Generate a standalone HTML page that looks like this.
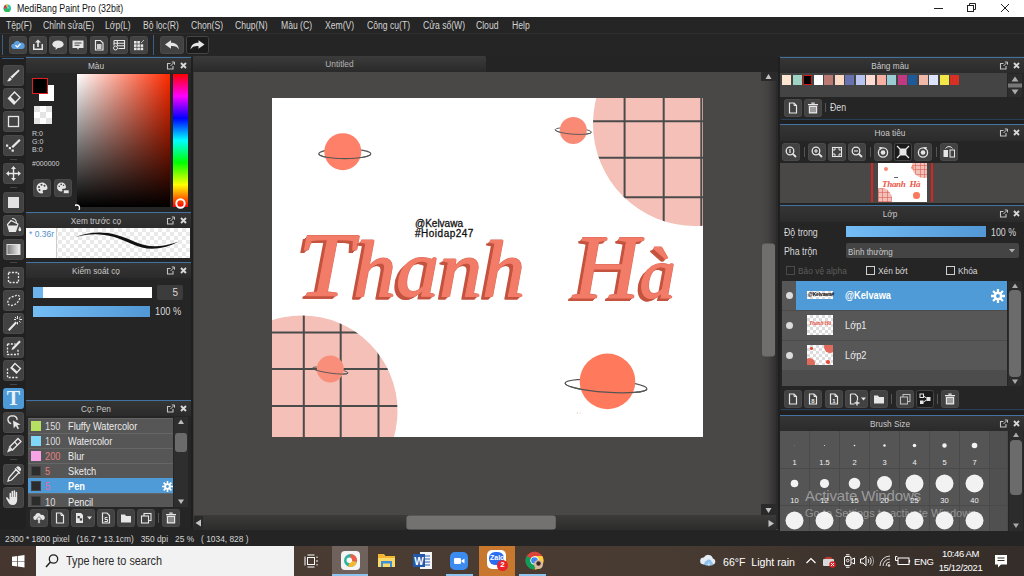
<!DOCTYPE html>
<html lang="vi">
<head>
<meta charset="utf-8">
<title>MediBang Paint Pro (32bit)</title>
<style>
*{box-sizing:border-box;margin:0;padding:0}
html,body{width:1024px;height:576px;overflow:hidden;background:#1f1f1f}
body{position:relative;font-family:"Liberation Sans","DejaVu Sans",sans-serif;font-size:10px;color:#d8d8d8;line-height:1}
.abs,#app *{position:absolute}
#app{position:absolute;left:0;top:0;width:1024px;height:576px;overflow:hidden}
#app svg *{position:static}
span.t,i.t{white-space:nowrap}
.sx{transform:scaleX(.88);transform-origin:0 50%}
/* title bar */
#title{left:0;top:0;width:1024px;height:16.500px;background:#fff;color:#222}
#title .name{left:17px;top:4px;font-size:10px;color:#111;transform:scaleX(.885);transform-origin:0 50%}
/* menu */
#menu{left:0;top:16.500px;width:1024px;height:17.500px;background:#252525;border-bottom:1px solid #2f2f2f}
#menu span{top:4.500px;font-size:10px;color:#d4d4d4;white-space:nowrap;transform:scaleX(.86);transform-origin:0 50%}
/* toolbar */
#tb{left:0;top:34px;width:1024px;height:23px;background:#252525;border-bottom:1px solid #2d2d2d}
.btn{background:#424242;border:1px solid #4a4a4a;border-radius:2.500px}
.btn.dark{background:#1b1b1b;border-color:#454545}
.btn svg{left:0;top:0}
/* panels */
.panel{background:#252525}
.ph{left:0;top:0;height:16px;background:linear-gradient(to bottom,#353535,#2b2b2b);border-top:1px solid #4273a3;color:#c9c9c9;font-size:9.5px;text-align:center;line-height:15px}
.ph i{font-style:normal}
.hl{font-family:'Liberation Serif','DejaVu Serif',serif;font-style:italic;font-weight:normal;color:#f27c68;line-height:1;letter-spacing:0;-webkit-text-stroke:1px #f27c68;text-shadow:1px 0 0 #d96a57,0 -1px 0 #d96a57,-1px 1px 0 #c4533f,-2px 2px 0 #c4533f,-3px 3px 0 #c4533f,-4px 3px 0 #c4533f}
.hl::first-letter{font-size:92px}
</style>
</head>
<body>
<div id="app">

<!-- ===== TITLE BAR ===== -->
<div id="title">
  <svg class="abs" style="left:3px;top:3.500px" width="8.500" height="8.500" viewBox="0 0 9 9"><circle cx="4.500" cy="4.500" r="4" fill="#27c3a4"/><path d="M4.500 4.500L.8 6A4 4 0 0 0 7.500 7.200z" fill="#2fb84c"/><path d="M4.500 4.500L.8 5A4 4 0 0 1 3 .8z" fill="#d9364c"/><path d="M4.500 4.500L3 .8A4 4 0 0 1 5.500 .6z" fill="#f0b93a"/><circle cx="5.300" cy="3.800" r="1.200" fill="#5fe0c8"/></svg>
  <span class="t name">MediBang Paint Pro (32bit)</span>
  <svg class="abs" style="left:930px;top:0" width="94" height="17" viewBox="0 0 94 17"><g stroke="#222" stroke-width="1" fill="none"><path d="M4 8.5h9"/><rect x="37.5" y="5.500" width="6" height="6"/><path d="M39.500 5.500v-2h6v6h-2"/><path d="M71 4l8 8M79 4l-8 8"/></g></svg>
</div>

<!-- ===== MENU BAR ===== -->
<div id="menu">
  <span style="left:6px">Tệp(F)</span>
  <span style="left:43px">Chỉnh sửa(E)</span>
  <span style="left:105px">Lớp(L)</span>
  <span style="left:143px">Bộ lọc(R)</span>
  <span style="left:191px">Chọn(S)</span>
  <span style="left:235px">Chụp(N)</span>
  <span style="left:281px">Màu (C)</span>
  <span style="left:325px">Xem(V)</span>
  <span style="left:367px">Công cụ(T)</span>
  <span style="left:423px">Cửa sổ(W)</span>
  <span style="left:476px">Cloud</span>
  <span style="left:512px">Help</span>
</div>

<!-- ===== TOOLBAR ===== -->
<div id="tb">
  <div class="abs" style="left:2px;top:1px;width:1px;height:20px;background:#3a5f86"></div>
  <div class="abs" style="left:153px;top:1px;width:1px;height:20px;background:#3a5f86"></div>
  <div class="btn" style="left:9px;top:2px;width:18px;height:18px"><svg width="16" height="16" viewBox="0 0 16 16"><path d="M4 12a2.6 2.6 0 0 1-.3-5.200A3.300 3.300 0 0 1 10 5.800a2.700 2.700 0 0 1 2.600 6.200z" fill="#5b9fe0"/><path d="M5.500 8.300l1.800 1.800 3.200-3.400" stroke="#fff" stroke-width="1.300" fill="none"/></svg></div>
  <div class="btn" style="left:29px;top:2px;width:18px;height:18px"><svg width="16" height="16" viewBox="0 0 16 16"><path d="M4.500 7h-1.500v6h10v-6h-1.500v4.500h-7z" fill="#e6e6e6"/><path d="M8 2.500l3 3h-2.200v4.500h-1.600v-4.500h-2.200z" fill="#e6e6e6"/></svg></div>
  <div class="btn" style="left:49px;top:2px;width:18px;height:18px"><svg width="16" height="16" viewBox="0 0 16 16"><ellipse cx="8" cy="7.200" rx="5.600" ry="3.800" fill="#e6e6e6"/><path d="M6 10l-.5 3 3-2.500z" fill="#e6e6e6"/></svg></div>
  <div class="btn" style="left:69px;top:2px;width:18px;height:18px"><svg width="16" height="16" viewBox="0 0 16 16"><path d="M2.500 3.500h11v7.500h-4.500l-1 1.800-1-1.800h-4.500z" fill="#e6e6e6"/><path d="M4.500 6h7M4.500 8.300h5" stroke="#424242" stroke-width="1.100"/></svg></div>
  <div class="btn" style="left:90px;top:2px;width:18px;height:18px"><svg width="16" height="16" viewBox="0 0 16 16"><path d="M4.500 3.500h5l2.500 2.500v7h-7.500z" fill="none" stroke="#e6e6e6" stroke-width="1.200"/><path d="M6 7h4.500v5h-4.500z" fill="#cfcfcf"/></svg></div>
  <div class="btn" style="left:110px;top:2px;width:18px;height:18px"><svg width="16" height="16" viewBox="0 0 16 16"><path d="M3 3.500h10.500v8h-6M3 3.500v5M3 6.200h10.500M6 8.800h7.500M6.300 3.500v5" fill="none" stroke="#e6e6e6" stroke-width="1.100"/><circle cx="4.500" cy="11" r="2" fill="none" stroke="#e6e6e6" stroke-width="1"/></svg></div>
  <div class="btn" style="left:130px;top:2px;width:18px;height:18px"><svg width="16" height="16" viewBox="0 0 16 16"><g fill="#e6e6e6"><rect x="3" y="4" width="2.600" height="2.600"/><rect x="6.300" y="4" width="2.600" height="2.600"/><rect x="3" y="7.300" width="2.600" height="2.600"/><rect x="6.300" y="7.300" width="2.600" height="2.600"/><rect x="9.600" y="7.300" width="2.600" height="2.600"/><rect x="3" y="10.600" width="2.600" height="2.600"/><rect x="6.300" y="10.600" width="2.600" height="2.600"/><rect x="9.600" y="10.600" width="2.600" height="2.600"/></g><path d="M10 6l3-3" stroke="#bbb" stroke-width="1"/></svg></div>
  <div class="btn" style="left:160px;top:2px;width:24px;height:18px"><svg width="22" height="16" viewBox="0 0 22 16"><path d="M4 7.500l6-4.300v2.600c5 0 7.500 2.500 8 6.700-1.500-2.600-4-3.600-8-3.400v2.700z" fill="#e6e6e6"/></svg></div>
  <div class="btn dark" style="left:186px;top:2px;width:23px;height:18px"><svg width="21" height="16" viewBox="0 0 21 16"><path d="M17.500 7.500l-6-4.300v2.600c-5 0-7.500 2.500-8 6.700 1.500-2.600 4-3.600 8-3.400v2.700z" fill="#e6e6e6"/></svg></div>
</div>

<!-- ===== LEFT TOOL COLUMN ===== -->
<div id="tools" class="abs" style="left:0;top:57px;width:26px;height:472px;background:#212121">
  <div class="abs" style="left:2px;top:1px;width:22px;height:1px;background:#3a5f86"></div>
<!--TOOLS_S-->
  <div class="btn" style="left:3px;top:8px;width:21px;height:21px"><svg width="19" height="19" viewBox="1 1 19 19"><path d="M15.500 4.500l1.200 1.200-7.500 7.800-1.800-1.800z" fill="#e8e8e8"/><path d="M7 12.200l1.800 1.800c-.8 2.200-3 2.600-5 2.200 1.600-.8 1.400-2.800 3.200-4z" fill="#e8e8e8"/></svg></div>
  <div class="btn" style="left:3px;top:31px;width:21px;height:21px"><svg width="19" height="19" viewBox="1 1 19 19"><path d="M11.500 4l5.500 5.500-6 6.500-5.500-5.500z" fill="none" stroke="#e8e8e8" stroke-width="1.400"/><path d="M7.500 8.600l5.400 5.400-2 2-5.400-5.400z" fill="#e8e8e8"/></svg></div>
  <div class="btn" style="left:3px;top:54px;width:21px;height:21px"><svg width="19" height="19" viewBox="1 1 19 19"><rect x="5.500" y="5.500" width="10" height="10" fill="none" stroke="#e8e8e8" stroke-width="1.300"/></svg></div>
  <div class="btn" style="left:3px;top:78px;width:21px;height:21px"><svg width="19" height="19" viewBox="1 1 19 19"><path d="M16.200 4l1.400 1.400-7.500 7.600-1.800-1.400z" fill="#e8e8e8"/><rect x="3" y="9.500" width="2.200" height="2.200" fill="#e8e8e8"/><rect x="5.800" y="12" width="2.200" height="2.200" fill="#e8e8e8"/><rect x="8.600" y="14.500" width="2.200" height="2.200" fill="#e8e8e8"/></svg></div>
  <div class="abs" style="left:10px;top:102px;width:7px;height:1px;background:#444"></div>
  <div class="btn" style="left:3px;top:106px;width:21px;height:21px"><svg width="19" height="19" viewBox="1 1 19 19"><path d="M10.500 3l2.500 3h-1.800v3.800h3.800v-1.800l3 2.500-3 2.500v-1.800h-3.800v3.800h1.800l-2.500 3-2.500-3h1.800v-3.800h-3.800v1.800l-3-2.500 3-2.500v1.800h3.800v-3.800h-1.800z" fill="#e8e8e8"/></svg></div>
  <div class="abs" style="left:10px;top:130px;width:7px;height:1px;background:#444"></div>
  <div class="btn" style="left:3px;top:135px;width:21px;height:21px"><svg width="19" height="19" viewBox="1 1 19 19"><rect x="5" y="5" width="11" height="11" fill="#e2e2e2"/></svg></div>
  <div class="btn" style="left:3px;top:158px;width:21px;height:21px"><svg width="19" height="19" viewBox="1 1 19 19"><path d="M8 5.500l7 3.500-2.500 7.500h-6l-2-7z" fill="none" stroke="#e8e8e8" stroke-width="1.200"/><path d="M5 10.500l9.500 0-2 5.500h-6z" fill="#e8e8e8"/><path d="M9 3.500c3 0 4.500 2 4.500 5" fill="none" stroke="#e8e8e8" stroke-width="1.100"/><path d="M16.800 11.500c.8 1.600 1.400 2.600 1.400 3.400a1.400 1.400 0 0 1-2.800 0c0-.8.600-1.800 1.400-3.400z" fill="#e8e8e8"/></svg></div>
  <div class="btn" style="left:3px;top:182px;width:21px;height:21px"><svg width="19" height="19" viewBox="1 1 19 19"><defs><linearGradient id="gg" x1="0" x2="1"><stop offset="0" stop-color="#777"/><stop offset="1" stop-color="#f2f2f2"/></linearGradient></defs><rect x="4" y="5.500" width="13" height="10" fill="url(#gg)" stroke="#ddd" stroke-width="1"/></svg></div>
  <div class="abs" style="left:10px;top:205px;width:7px;height:1px;background:#444"></div>
  <div class="btn" style="left:3px;top:210px;width:21px;height:21px"><svg width="19" height="19" viewBox="1 1 19 19"><rect x="5.500" y="5.500" width="10" height="10" fill="none" stroke="#e8e8e8" stroke-width="1.300" stroke-dasharray="2 1.400"/></svg></div>
  <div class="btn" style="left:3px;top:233px;width:21px;height:21px"><svg width="19" height="19" viewBox="1 1 19 19"><path d="M6 9c2-3 5-2 7-3.500 2-1.200 4.500.5 3.500 3.500-1 3.500-5 6.500-8.500 6.500-3.500 0-4-3.500-2-6.500z" fill="none" stroke="#e8e8e8" stroke-width="1.300" stroke-dasharray="2 1.400"/></svg></div>
  <div class="btn" style="left:3px;top:256px;width:21px;height:21px"><svg width="19" height="19" viewBox="1 1 19 19"><path d="M5 16.500l7.500-8 1.500 1.500-7.500 8z" fill="#e8e8e8"/><path d="M14.500 3v3M14.500 9v2.500M11 6.500h2M16.500 6.500h2.500M12 4l1.400 1.400M17.500 4l-1.400 1.400M17.500 9.500l-1.400-1.400" stroke="#e8e8e8" stroke-width="1"/></svg></div>
  <div class="btn" style="left:3px;top:280px;width:21px;height:21px"><svg width="19" height="19" viewBox="1 1 19 19"><path d="M4.500 7h8M4.500 7v10.500h10.500v-6" fill="none" stroke="#e8e8e8" stroke-width="1.300" stroke-dasharray="2 1.400"/><path d="M16.200 3.500l1.600 1.600-7 7.200-2.300.8.700-2.400z" fill="#e8e8e8"/></svg></div>
  <div class="btn" style="left:3px;top:303px;width:21px;height:21px"><svg width="19" height="19" viewBox="1 1 19 19"><path d="M4.500 8.500v9h10" fill="none" stroke="#e8e8e8" stroke-width="1.300" stroke-dasharray="2 1.400"/><path d="M12 3.500l5.500 5-4 4.500-5.500-5z" fill="none" stroke="#e8e8e8" stroke-width="1.300"/><path d="M9 6.800l5.500 5-1 1.200-5.500-5z" fill="#e8e8e8"/></svg></div>
  <div class="abs" style="left:10px;top:327px;width:7px;height:1px;background:#444"></div>
  <div class="btn" style="left:3px;top:331px;width:21px;height:21px;background:#4d9ad6;border-color:#4d9ad6"><span class="t" style="left:0;top:-1px;width:19px;text-align:center;font-family:'Liberation Serif',serif;font-weight:bold;font-size:20px;color:#e8f2fb;line-height:21px">T</span></div>
  <div class="btn" style="left:3px;top:355px;width:21px;height:21px"><svg width="19" height="19" viewBox="1 1 19 19"><path d="M5 8c-.5-2.500 2-4.500 4.500-4 2.500-.5 5 1.500 4.500 4" fill="none" stroke="#e8e8e8" stroke-width="1.400"/><path d="M5 8c.2 2 1.500 3.200 3.200 3.600" fill="none" stroke="#e8e8e8" stroke-width="1.400"/><path d="M10 8.500l7.500 4-3.200.8 1.800 3.200-1.400.8-1.800-3.200-2.200 2.200z" fill="#e8e8e8"/></svg></div>
  <div class="btn" style="left:3px;top:378px;width:21px;height:21px"><svg width="19" height="19" viewBox="1 1 19 19"><path d="M15 3.500l3 3-8.500 8.500-3-3z" fill="none" stroke="#e8e8e8" stroke-width="1.300"/><path d="M6 12.500l3 3-5 2z" fill="#e8e8e8"/><path d="M11.500 7l3 3" stroke="#e8e8e8" stroke-width="1.200"/></svg></div>
  <div class="abs" style="left:10px;top:402px;width:7px;height:1px;background:#444"></div>
  <div class="btn" style="left:3px;top:407px;width:21px;height:21px"><svg width="19" height="19" viewBox="1 1 19 19"><path d="M13 5.500l3 3-7.500 7.500-3.500 1 1-3.500z" fill="none" stroke="#e8e8e8" stroke-width="1.300"/><path d="M12 4.500l5 5M14 3.500c1.500-1.500 4.500 1.500 3 3z" fill="#e8e8e8" stroke="#e8e8e8" stroke-width="1.300"/></svg></div>
  <div class="btn" style="left:3px;top:430px;width:21px;height:21px"><svg width="19" height="19" viewBox="1 1 19 19"><path d="M6.500 11v-4.500c0-1 1.500-1 1.500 0v3.500h.5v-5.500c0-1 1.600-1 1.600 0v5.500h.5v-6c0-1 1.600-1 1.600 0v6h.5v-4.500c0-1 1.500-1 1.500 0v7c0 3.500-1.500 5.500-4.500 5.500-2.500 0-3.500-1-4.500-3l-2-3.500c-.5-1 .8-1.800 1.500-.8l1.800 2.300z" fill="#e8e8e8"/></svg></div>
<!--TOOLS_E-->
</div>

<!-- ===== LEFT PANELS ===== -->
<!--LEFT_S-->
<div id="pcolor" class="panel" style="left:26px;top:57px;width:165px;height:155px">
  <div class="ph" style="width:165px;height:16px;line-height:15px"><i class="t" style="left:0;width:140px;text-align:center;transform:scaleX(.87)">Màu</i><svg style="left:139px;top:2px" width="24" height="11" viewBox="0 0 24 11"><path d="M5.500 3.500h-3v5.500h5.500v-3" fill="none" stroke="#c4c4c4" stroke-width="1.100"/><path d="M5.500 6l3.500-3.500M6.800 2h2.700v2.700" fill="none" stroke="#c4c4c4" stroke-width="1"/><path d="M16 3l5 5M21 3l-5 5" stroke="#d8d8d8" stroke-width="1.900"/></svg></div>
  <div class="abs" style="left:13px;top:28px;width:15px;height:16px;background:#fff"></div>
  <div class="abs" style="left:6px;top:21px;width:16px;height:16px;background:#000;border:1px solid #e02020"></div>
  <div class="abs" style="left:8px;top:49px;width:18px;height:18px;background:#fff"><div style="left:0;top:0;width:6px;height:6px;background:#e4e4e4"></div><div style="left:12px;top:0;width:6px;height:6px;background:#e4e4e4"></div><div style="left:6px;top:6px;width:6px;height:6px;background:#e4e4e4"></div><div style="left:0;top:12px;width:6px;height:6px;background:#e4e4e4"></div><div style="left:12px;top:12px;width:6px;height:6px;background:#e4e4e4"></div></div>
  <span class="t sx" style="left:6px;top:73px;font-size:8px;color:#d0d0d0">R:0</span>
  <span class="t sx" style="left:6px;top:81px;font-size:8px;color:#d0d0d0">G:0</span>
  <span class="t sx" style="left:6px;top:89px;font-size:8px;color:#d0d0d0">B:0</span>
  <span class="t sx" style="left:6px;top:103px;font-size:8px;color:#d0d0d0">#000000</span>
  <div class="btn" style="left:7px;top:122px;width:18px;height:18px"><svg width="16" height="16" viewBox="0 0 16 16"><path d="M8 2.500a5.500 5.500 0 1 0 0 11c1.200 0 1.400-1 .9-1.700-.6-.9 0-1.800 1-1.800h1.600c1.200 0 2-.8 2-2 0-3-2.500-5.500-5.500-5.500z" fill="#e6e6e6"/><circle cx="5" cy="7" r="1" fill="#424242"/><circle cx="7.500" cy="4.800" r="1" fill="#424242"/><circle cx="10.500" cy="5.800" r="1" fill="#424242"/><circle cx="5.500" cy="10" r="1" fill="#424242"/></svg></div>
  <div class="btn" style="left:28px;top:122px;width:18px;height:18px"><svg width="16" height="16" viewBox="0 0 16 16"><path d="M6.500 2.500a4.500 4.500 0 1 0 0 9c1 0 1.200-.8.800-1.400-.5-.7 0-1.400.8-1.400h1.200c1 0 1.700-.7 1.700-1.700 0-2.500-2-4.500-4.500-4.500z" fill="#e6e6e6"/><circle cx="4.200" cy="6.200" r=".8" fill="#424242"/><circle cx="6.200" cy="4.400" r=".8" fill="#424242"/><circle cx="8.600" cy="5.200" r=".8" fill="#424242"/><rect x="8.500" y="10" width="5.500" height="3.500" fill="#e6e6e6" stroke="#424242" stroke-width=".6"/></svg></div>
  <div class="abs" style="left:51px;top:17px;width:93px;height:133px;background:linear-gradient(to bottom,rgba(0,0,0,0),#000),linear-gradient(to right,#fff,#ff2a00)"></div>
  <svg class="abs" style="left:49px;top:145px" width="8" height="8" viewBox="0 0 8 8"><circle cx="1.500" cy="6" r="3" fill="none" stroke="#fff" stroke-width="1.300"/></svg>
  <div class="abs" style="left:147px;top:17px;width:15px;height:133px;background:linear-gradient(to bottom,#ff0000 0%,#ff00ff 16.600%,#0000ff 33.300%,#00ffff 50%,#00ff00 66.600%,#ffff00 83.300%,#ff0000 100%)"></div>
  <svg class="abs" style="left:148px;top:140px" width="13" height="13" viewBox="0 0 13 13"><circle cx="6.500" cy="6.500" r="4.200" fill="none" stroke="#fff" stroke-width="2"/></svg>
</div>
<div id="pprev" class="panel" style="left:26px;top:212px;width:165px;height:50px">
  <div class="ph" style="width:165px;height:16px;line-height:15px"><i class="t" style="left:0;width:140px;text-align:center;transform:scaleX(.87)">Xem trước cọ</i><svg style="left:139px;top:2px" width="24" height="11" viewBox="0 0 24 11"><path d="M5.500 3.500h-3v5.500h5.500v-3" fill="none" stroke="#c4c4c4" stroke-width="1.100"/><path d="M5.500 6l3.500-3.500M6.800 2h2.700v2.700" fill="none" stroke="#c4c4c4" stroke-width="1"/><path d="M16 3l5 5M21 3l-5 5" stroke="#d8d8d8" stroke-width="1.900"/></svg></div>
  <div class="abs" style="left:0;top:16px;width:164px;height:30px;background-color:#fff;background-image:linear-gradient(45deg,#e9e9e9 25%,transparent 25%,transparent 75%,#e9e9e9 75%),linear-gradient(45deg,#e9e9e9 25%,transparent 25%,transparent 75%,#e9e9e9 75%);background-size:8px 8px;background-position:0 0,4px 4px;overflow:hidden">
    <div class="abs" style="left:0;top:0;width:31px;height:30px;background:#fff;border-right:1px solid #ccc"></div>
    <span class="t" style="left:3px;top:2px;font-size:8.500px;color:#4f8fce">* 0.36r</span>
    <svg class="abs" style="left:30px;top:0" width="134" height="30" viewBox="0 0 134 30"><path d="M18 9.500C40 1 58 4 78 13.500c14 6.500 28 6 45 0-17 8.500-32 9.800-47 2.500C56 6.500 40 3 18 9.500z" fill="#111"/></svg>
  </div>
</div>
<div id="pctrl" class="panel" style="left:26px;top:262px;width:165px;height:138px">
  <div class="ph" style="width:165px;height:16px;line-height:15px"><i class="t" style="left:0;width:140px;text-align:center;transform:scaleX(.87)">Kiểm soát cọ</i><svg style="left:139px;top:2px" width="24" height="11" viewBox="0 0 24 11"><path d="M5.500 3.500h-3v5.500h5.500v-3" fill="none" stroke="#c4c4c4" stroke-width="1.100"/><path d="M5.500 6l3.500-3.500M6.800 2h2.700v2.700" fill="none" stroke="#c4c4c4" stroke-width="1"/><path d="M16 3l5 5M21 3l-5 5" stroke="#d8d8d8" stroke-width="1.900"/></svg></div>
  <div class="abs" style="left:7px;top:25px;width:119px;height:11px;background:#fff"><div style="left:0;top:0;width:10px;height:11px;background:#6db4ee"></div></div>
  <div class="abs" style="left:131px;top:23px;width:26px;height:15px;background:#3c3c3c;border-radius:2px"><span class="t" style="left:0;top:3px;width:21px;text-align:right;font-size:10px;color:#d8d8d8">5</span></div>
  <div class="abs" style="left:7px;top:44px;width:117px;height:11px;background:linear-gradient(to right,#74bcf4,#5298d6)"></div>
  <span class="t sx" style="left:129px;top:44px;font-size:10.500px;color:#d8d8d8">100 %</span>
</div>
<div id="pbrush" class="panel" style="left:26px;top:400px;width:165px;height:129px">
  <div class="ph" style="width:165px;height:16px;line-height:15px"><i class="t" style="left:0;width:140px;text-align:center;transform:scaleX(.87)">Cọ: Pen</i><svg style="left:139px;top:2px" width="24" height="11" viewBox="0 0 24 11"><path d="M5.500 3.500h-3v5.500h5.500v-3" fill="none" stroke="#c4c4c4" stroke-width="1.100"/><path d="M5.500 6l3.500-3.500M6.800 2h2.700v2.700" fill="none" stroke="#c4c4c4" stroke-width="1"/><path d="M16 3l5 5M21 3l-5 5" stroke="#d8d8d8" stroke-width="1.900"/></svg></div>
  <div class="abs" style="left:2px;top:17.5px;width:145px;height:15px;background:#565656;border-top:1px solid #666;overflow:hidden"><div style="left:3px;top:2px;width:10px;height:10px;background:#b5e061;"></div><span class="t sx" style="left:16.500px;top:2.500px;font-size:10.500px;color:#ddd">150</span><span class="t sx" style="left:40px;top:2.500px;font-size:10.500px;color:#ececec;font-weight:normal">Fluffy Watercolor</span></div>
  <div class="abs" style="left:2px;top:32.6px;width:145px;height:15px;background:#565656;border-top:1px solid #666;overflow:hidden"><div style="left:3px;top:2px;width:10px;height:10px;background:#7fd8f8;"></div><span class="t sx" style="left:16.500px;top:2.500px;font-size:10.500px;color:#ddd">100</span><span class="t sx" style="left:40px;top:2.500px;font-size:10.500px;color:#ececec;font-weight:normal">Watercolor</span></div>
  <div class="abs" style="left:2px;top:47.7px;width:145px;height:15px;background:#565656;border-top:1px solid #666;overflow:hidden"><div style="left:3px;top:2px;width:10px;height:10px;background:#f7a3e6;"></div><span class="t sx" style="left:16.500px;top:2.500px;font-size:10.500px;color:#e07f7f">200</span><span class="t sx" style="left:40px;top:2.500px;font-size:10.500px;color:#ececec;font-weight:normal">Blur</span></div>
  <div class="abs" style="left:2px;top:62.8px;width:145px;height:15px;background:#565656;border-top:1px solid #666;overflow:hidden"><div style="left:3px;top:2px;width:10px;height:10px;background:#2c2c2c;border:1px solid #444;"></div><span class="t sx" style="left:16.500px;top:2.500px;font-size:10.500px;color:#e07f7f">5</span><span class="t sx" style="left:40px;top:2.500px;font-size:10.500px;color:#ececec;font-weight:normal">Sketch</span></div>
  <div class="abs" style="left:2px;top:77.9px;width:145px;height:15px;background:#4f9bd7;border-top:1px solid #4f9bd7;overflow:hidden"><div style="left:3px;top:2px;width:10px;height:10px;background:#2c2c2c;border:1px solid #444;"></div><span class="t sx" style="left:16.500px;top:2.500px;font-size:10.500px;color:#e86aa0">5</span><span class="t sx" style="left:40px;top:2.500px;font-size:10.500px;color:#fff;font-weight:bold">Pen</span><svg style="left:134px;top:2px" width="11" height="11" viewBox="0 0 11 11"><g fill="#fff"><circle cx="5.500" cy="5.500" r="3.300"/><path d="M4.700 0h1.600v11h-1.600zM0 4.700h11v1.600h-11z"/><path d="M4.700 0h1.600v11h-1.600zM0 4.700h11v1.600h-11z" transform="rotate(45 5.500 5.500)"/></g><circle cx="5.500" cy="5.500" r="1.400" fill="#4f9bd7"/></svg></div>
  <div class="abs" style="left:2px;top:93px;width:145px;height:14px;background:#565656;border-top:1px solid #666;overflow:hidden"><div style="left:3px;top:2px;width:10px;height:10px;background:#2c2c2c;border:1px solid #444;"></div><span class="t sx" style="left:16.500px;top:2.500px;font-size:10.500px;color:#ddd">10</span><span class="t sx" style="left:40px;top:2.500px;font-size:10.500px;color:#ececec;font-weight:normal">Pencil</span></div>
  <div class="abs" style="left:148px;top:17px;width:14px;height:90px;background:#2e2e2e"></div>
  <svg class="abs" style="left:148px;top:17px" width="14" height="90" viewBox="0 0 14 90"><path d="M7 2.500l3 4.500h-6z" fill="#bdbdbd"/><path d="M7 87l3-4.500h-6z" fill="#bdbdbd"/><rect x="1" y="16" width="12" height="19" rx="3" fill="#6b6b6b"/></svg>
  <div class="btn" style="left:4px;top:109px;width:18px;height:18px"><svg width="16" height="16" viewBox="0 0 16 16"><path d="M4 10a2.300 2.300 0 0 1 .2-4.500A3 3 0 0 1 10 5a2.500 2.500 0 0 1 2 5z" fill="#e6e6e6"/><path d="M8 6.500l3 3.300h-1.900v3.700h-2.200v-3.700h-1.900z" fill="#e6e6e6" stroke="#424242" stroke-width=".6"/></svg></div><div class="btn" style="left:25px;top:109px;width:18px;height:18px"><svg width="16" height="16" viewBox="0 0 16 16"><path d="M4.500 3h4.500l2.500 2.500v7.500h-7z" fill="none" stroke="#e6e6e6" stroke-width="1.200"/><path d="M9 3v2.500h2.500" fill="none" stroke="#e6e6e6" stroke-width="1"/></svg></div><div class="btn" style="left:45px;top:109px;width:24px;height:18px"><svg width="22" height="16" viewBox="0 0 22 16"><path d="M4 3h5l2 2v8h-7z" fill="#e6e6e6"/><rect x="5.500" y="6" width="2.300" height="2.300" fill="#424242"/><rect x="7.800" y="8.300" width="2.300" height="2.300" fill="#424242"/><path d="M15 6.500h5l-2.500 3z" fill="#e6e6e6"/></svg></div><div class="btn" style="left:71px;top:109px;width:18px;height:18px"><svg width="16" height="16" viewBox="0 0 16 16"><path d="M4.500 3h4.500l2.500 2.500v7.500h-7z" fill="none" stroke="#e6e6e6" stroke-width="1.200"/><path d="M9.500 7.500h-2.500v2h2.500v2h-3" fill="none" stroke="#e6e6e6" stroke-width="1"/></svg></div><div class="btn" style="left:91px;top:109px;width:18px;height:18px"><svg width="16" height="16" viewBox="0 0 16 16"><path d="M3 4.500h4l1 1.500h5v6.500h-10z" fill="#e6e6e6"/></svg></div><div class="btn" style="left:111px;top:109px;width:18px;height:18px"><svg width="16" height="16" viewBox="0 0 16 16"><rect x="6" y="3.500" width="7" height="7" fill="none" stroke="#e6e6e6" stroke-width="1.100"/><rect x="3.500" y="6" width="7" height="7" fill="#424242" stroke="#e6e6e6" stroke-width="1.100"/></svg></div><div class="abs" style="left:132px;top:113px;width:1px;height:10px;background:#555"></div><div class="btn" style="left:136px;top:109px;width:18px;height:18px"><svg width="16" height="16" viewBox="0 0 16 16"><path d="M3.800 5.800h8.400v7.700h-8.400z" fill="#e6e6e6"/><path d="M6 7v5.200M8 7v5.200M10 7v5.200" stroke="#3a3a3a" stroke-width="1.100"/><path d="M3 4.600h10M6.300 3.200h3.400" stroke="#e6e6e6" stroke-width="1.300"/></svg></div>
</div>
<!--LEFT_E-->

<!-- ===== CANVAS AREA ===== -->
<div id="cv" class="abs" style="left:193px;top:57px;width:585px;height:473px;background:#4a4847;z-index:1">
  <div class="abs" style="left:0;top:-1px;width:585px;height:16px;background:#242424"></div>
  <div class="abs" style="left:0;top:-1px;width:293px;height:16px;background:linear-gradient(to bottom,#3b3b3b,#2a2a2a);border-radius:2px 2px 0 0"><span class="t" style="left:0;top:3px;width:293px;text-align:center;font-size:9.500px;color:#b4b4b4;transform:scaleX(.88)">Untitled</span></div>
  <div id="paper" class="abs" style="left:79px;top:41px;width:431px;height:339px;background:#fff;overflow:hidden">
<!--PAPER_S-->
<svg class="abs" style="left:0;top:0" width="431" height="339" viewBox="0 0 431 339">
<clipPath id="c1"><circle cx="423" cy="26" r="102"/></clipPath><circle cx="423" cy="26" r="102" fill="#f4c0b8"/><g clip-path="url(#c1)" stroke="#4b4b4b" stroke-width="2" fill="none"><path d="M352.6 -5V345"/><path d="M391.7 -5V345"/><path d="M429.3 -5V345"/><path d="M-5 23.3H440"/><path d="M-5 59.7H440"/><path d="M-5 99.3H440"/></g>
<clipPath id="c2"><circle cx="30" cy="313" r="95.5"/></clipPath><circle cx="30" cy="313" r="95.5" fill="#f4c0b8"/><g clip-path="url(#c2)" stroke="#4b4b4b" stroke-width="2" fill="none"><path d="M31.8 -5V345"/><path d="M68.7 -5V345"/><path d="M106.5 -5V345"/><path d="M-5 234.5H440"/><path d="M-5 271H440"/><path d="M-5 308H440"/></g>
<g><ellipse cx="72.8" cy="55.8" rx="26" ry="4.8" transform="rotate(0 72.8 55.8)" fill="none" stroke="#555" stroke-width="1.1"/><circle cx="70.8" cy="53.7" r="18.5" fill="#ff8068"/><path d="M46.8 55.8A26 4.8 0 0 0 98.8 55.8" transform="rotate(0 72.8 55.8)" fill="none" stroke="#555" stroke-width="1.1"/></g>
<g><ellipse cx="301.3" cy="33" rx="18.2" ry="3.2" transform="rotate(4 301.3 33)" fill="none" stroke="#555" stroke-width="0.9"/><circle cx="301.3" cy="32.4" r="13.5" fill="#f98b76"/><path d="M283.1 33A18.2 3.2 0 0 0 319.5 33" transform="rotate(4 301.3 33)" fill="none" stroke="#555" stroke-width="0.9"/></g>
<g><ellipse cx="58.3" cy="272.5" rx="18" ry="2.6" transform="rotate(8 58.3 272.5)" fill="none" stroke="#555" stroke-width="0.9"/><circle cx="58.3" cy="271" r="13.5" fill="#f98f7b"/><path d="M40.3 272.5A18 2.6 0 0 0 76.3 272.5" transform="rotate(8 58.3 272.5)" fill="none" stroke="#555" stroke-width="0.9"/></g>
<g><ellipse cx="334" cy="288" rx="41" ry="6.2" transform="rotate(4 334 288)" fill="none" stroke="#555" stroke-width="1.2"/><circle cx="335.5" cy="283.4" r="27.8" fill="#ff7a5c"/><path d="M293 288A41 6.2 0 0 0 375 288" transform="rotate(4 334 288)" fill="none" stroke="#555" stroke-width="1.2"/></g>
<circle cx="305.500" cy="315" r=".6" fill="#f0a090"/><circle cx="308" cy="315" r=".5" fill="#f0b0a0"/>
</svg>
<span class="t" style="left:143px;top:121px;font-size:10px;color:#111;-webkit-text-stroke:.3px #111">@Kelvawa</span>
<span class="t" style="left:143px;top:130.500px;font-size:10px;color:#111;letter-spacing:.5px;-webkit-text-stroke:.3px #111">#Hoidap247</span>
<span class="t hl hl1" style="left:26px;top:121px;font-size:80px;transform:scaleX(1.075);transform-origin:0 0">Thanh</span><span class="t hl hl2" style="left:301px;top:123px;font-size:72px;transform:scaleX(1.0);transform-origin:0 0">Hà</span>

<!--PAPER_E-->
  </div>
  <!--SB_S-->
  <div class="abs" style="left:568px;top:15px;width:15px;height:445px;background:linear-gradient(to right,#4a4847 0%,#444241 45%,#302f2f 100%)"></div>
  <div class="abs" style="left:568px;top:15px;width:15px;height:9px;background:#2a2a2a"></div>
  <div class="abs" style="left:568px;top:447px;width:15px;height:11px;background:#2a2a2a"></div>
  <svg class="abs" style="left:568px;top:15px" width="15" height="445" viewBox="0 0 15 445"><path d="M7.500 2l3 5h-6z" fill="#c4c4c4"/><path d="M7.500 441l3-5h-6z" fill="#c4c4c4"/><rect x="1" y="171.500" width="13" height="113" rx="3" fill="#6f6e6c"/></svg>
  <div class="abs" style="left:0;top:457.500px;width:583px;height:15.500px;background:linear-gradient(to bottom,#3c3b3a,#2c2c2c);z-index:2"></div>
  <div class="abs" style="left:1px;top:459px;width:9px;height:14px;background:#2a2a2a;z-index:2"></div>
  
  <svg class="abs" style="left:0;top:458px;z-index:2" width="583" height="15" viewBox="0 0 583 15"><path d="M2.500 8l5.500-3.500v7z" fill="#c4c4c4"/><path d="M581 8.500l-5.500-3.500v7z" fill="#c4c4c4"/><rect x="213.400" y=".5" width="149.400" height="14" rx="3" fill="#737271"/></svg>
  <div class="abs" style="left:0;top:15px;width:1px;height:457px;background:#3a3a3c"></div>
  
  <div class="abs" style="left:583px;top:15px;width:2px;height:457px;background:#2a2a2a"></div>
  <!--SB_E-->
</div>

<!-- ===== RIGHT PANELS ===== -->
<!--RIGHT_S-->
<div id="ppal" class="panel" style="left:780px;top:57px;width:244px;height:63px">
  <div class="ph" style="width:244px;height:16px;line-height:15px"><i class="t" style="left:0;width:220px;text-align:center;transform:scaleX(.87)">Bảng màu</i><svg style="left:218px;top:2px" width="24" height="11" viewBox="0 0 24 11"><path d="M5.500 3.500h-3v5.500h5.500v-3" fill="none" stroke="#c4c4c4" stroke-width="1.100"/><path d="M5.500 6l3.500-3.500M6.800 2h2.700v2.700" fill="none" stroke="#c4c4c4" stroke-width="1"/><path d="M16 3l5 5M21 3l-5 5" stroke="#d8d8d8" stroke-width="1.900"/></svg></div>
  <div class="abs" style="left:0;top:16px;width:227px;height:24px;background:#444"><div class="abs" style="left:2px;top:2px;width:9px;height:9.500px;background:#fde5cf;"></div><div class="abs" style="left:12.5px;top:2px;width:9px;height:9.500px;background:#9fd4c4;"></div><div class="abs" style="left:23px;top:2px;width:9px;height:9.500px;background:#000000;border:1px solid #d01818;"></div><div class="abs" style="left:33.5px;top:2px;width:9px;height:9.500px;background:#ffffff;"></div><div class="abs" style="left:44px;top:2px;width:9px;height:9.500px;background:#b97a74;"></div><div class="abs" style="left:54.5px;top:2px;width:9px;height:9.500px;background:#fcd9c3;"></div><div class="abs" style="left:65px;top:2px;width:9px;height:9.500px;background:#6872ae;"></div><div class="abs" style="left:75.5px;top:2px;width:9px;height:9.500px;background:#b9c3ef;"></div><div class="abs" style="left:86px;top:2px;width:9px;height:9.500px;background:#fcdcd3;"></div><div class="abs" style="left:96.5px;top:2px;width:9px;height:9.500px;background:#f5b0a3;"></div><div class="abs" style="left:107px;top:2px;width:9px;height:9.500px;background:#9bcbd3;"></div><div class="abs" style="left:117.5px;top:2px;width:9px;height:9.500px;background:#c03a82;"></div><div class="abs" style="left:128px;top:2px;width:9px;height:9.500px;background:#1f5a98;"></div><div class="abs" style="left:138.5px;top:2px;width:9px;height:9.500px;background:#f0b8a8;"></div><div class="abs" style="left:149px;top:2px;width:9px;height:9.500px;background:#dde3fa;"></div><div class="abs" style="left:159.5px;top:2px;width:9px;height:9.500px;background:#f5e648;"></div><div class="abs" style="left:170px;top:2px;width:9px;height:9.500px;background:#d93025;"></div></div>
  <svg class="abs" style="left:228px;top:17px" width="14" height="23" viewBox="0 0 14 23"><rect x="0" y="0" width="14" height="23" fill="#2c2c2c"/><path d="M7 2.500l3.500 5h-7zM7 20.500l3.500-5h-7z" fill="#aaa"/><rect x="0" y="9.500" width="14" height="4" fill="#777"/></svg>
  <div class="btn" style="left:4px;top:42px;width:18px;height:18px"><svg width="16" height="16" viewBox="0 0 16 16"><path d="M4.500 3h4.500l2.500 2.500v7.500h-7z" fill="none" stroke="#e6e6e6" stroke-width="1.200"/><path d="M9 3v2.500h2.500" fill="none" stroke="#e6e6e6" stroke-width="1"/></svg></div><div class="btn" style="left:24px;top:42px;width:18px;height:18px"><svg width="16" height="16" viewBox="0 0 16 16"><path d="M3.800 5.800h8.400v7.700h-8.400z" fill="#e6e6e6"/><path d="M6 7v5.200M8 7v5.200M10 7v5.200" stroke="#424242" stroke-width=".9"/><path d="M3 4.600h10M6.300 3.200h3.400" stroke="#e6e6e6" stroke-width="1.300"/></svg></div>
  <div class="abs" style="left:45px;top:46px;width:1px;height:9px;background:#555"></div>
  <span class="t sx" style="left:50px;top:46px;font-size:10px;color:#d8d8d8">Đen</span>
  <div class="abs" style="left:1px;top:62px;width:243px;height:1px;background:#273f58"></div>
</div>
<div id="pnav" class="panel" style="left:780px;top:124px;width:244px;height:81px">
  <div class="ph" style="width:244px;height:17px;line-height:16px"><i class="t" style="left:0;width:220px;text-align:center;transform:scaleX(.87)">Hoa tiêu</i><svg style="left:218px;top:2px" width="24" height="11" viewBox="0 0 24 11"><path d="M5.500 3.500h-3v5.500h5.500v-3" fill="none" stroke="#c4c4c4" stroke-width="1.100"/><path d="M5.500 6l3.500-3.500M6.800 2h2.700v2.700" fill="none" stroke="#c4c4c4" stroke-width="1"/><path d="M16 3l5 5M21 3l-5 5" stroke="#d8d8d8" stroke-width="1.900"/></svg></div>
  <div class="btn" style="left:2px;top:19px;width:18px;height:18px"><svg width="16" height="16" viewBox="0 0 16 16"><circle cx="7" cy="7" r="3.800" fill="none" stroke="#e6e6e6" stroke-width="1.300"/><path d="M9.800 9.800l3.200 3.200" stroke="#e6e6e6" stroke-width="1.800"/><path d="M7 5v4" stroke="#e6e6e6" stroke-width="1.200"/></svg></div><div class="abs" style="left:24px;top:23px;width:1px;height:10px;background:#555"></div><div class="btn" style="left:28px;top:19px;width:18px;height:18px"><svg width="16" height="16" viewBox="0 0 16 16"><circle cx="7" cy="7" r="3.800" fill="none" stroke="#e6e6e6" stroke-width="1.300"/><path d="M9.800 9.800l3.200 3.200" stroke="#e6e6e6" stroke-width="1.800"/><path d="M7 5v4M5 7h4" stroke="#e6e6e6" stroke-width="1.100"/></svg></div><div class="btn" style="left:48px;top:19px;width:18px;height:18px"><svg width="16" height="16" viewBox="0 0 16 16"><rect x="3.500" y="3.500" width="9" height="9" fill="none" stroke="#e6e6e6" stroke-width="1.100"/><path d="M5 7v-2h2M9 5h2v2M11 9v2h-2M7 11h-2v-2" fill="none" stroke="#e6e6e6" stroke-width="1"/></svg></div><div class="btn" style="left:68px;top:19px;width:18px;height:18px"><svg width="16" height="16" viewBox="0 0 16 16"><circle cx="7" cy="7" r="3.800" fill="none" stroke="#e6e6e6" stroke-width="1.300"/><path d="M9.800 9.800l3.200 3.200" stroke="#e6e6e6" stroke-width="1.800"/><path d="M5 7h4" stroke="#e6e6e6" stroke-width="1.100"/></svg></div><div class="abs" style="left:90px;top:23px;width:1px;height:10px;background:#555"></div><div class="btn" style="left:94px;top:19px;width:18px;height:18px"><svg width="16" height="16" viewBox="0 0 16 16"><circle cx="8" cy="8.500" r="4.600" fill="none" stroke="#e6e6e6" stroke-width="1.300"/><circle cx="8" cy="8.500" r="2.300" fill="#e6e6e6"/><path d="M4 3l3.500.2-2 2.800z" fill="#e6e6e6"/></svg></div><div class="btn dark" style="left:114px;top:19px;width:18px;height:18px"><svg width="16" height="16" viewBox="0 0 16 16"><rect x="4.500" y="4.500" width="7" height="7" fill="#e6e6e6"/><path d="M2 2l3 3M14 2l-3 3M2 14l3-3M14 14l-3-3" stroke="#e6e6e6" stroke-width="1.300"/></svg></div><div class="btn" style="left:134px;top:19px;width:18px;height:18px"><svg width="16" height="16" viewBox="0 0 16 16"><circle cx="8" cy="8.500" r="4.600" fill="none" stroke="#e6e6e6" stroke-width="1.300"/><circle cx="8" cy="8.500" r="2.300" fill="#e6e6e6"/><path d="M12 3l-3.500.2 2 2.800z" fill="#e6e6e6"/></svg></div><div class="abs" style="left:156px;top:23px;width:1px;height:10px;background:#555"></div><div class="btn" style="left:160px;top:19px;width:18px;height:18px"><svg width="16" height="16" viewBox="0 0 16 16"><rect x="2.500" y="6" width="4.500" height="7" fill="#e6e6e6"/><rect x="9" y="6" width="4.500" height="7" fill="none" stroke="#e6e6e6" stroke-width="1"/><path d="M4.500 4.500c1.500-2.500 5.500-2.500 7 0" fill="none" stroke="#e6e6e6" stroke-width="1"/></svg></div>
  <div class="abs" style="left:0;top:39px;width:244px;height:40px;background:#4a4847;overflow:hidden">
    <div class="abs" style="left:98px;top:0;width:49px;height:39px;background:#fff;overflow:hidden">
      <div style="left:34px;top:-9px;width:24px;height:24px;border-radius:50%;background:#f2c0b8;background-image:repeating-linear-gradient(0deg,transparent 0 3.500px,rgba(215,90,80,.55) 3.500px 4.400px),repeating-linear-gradient(90deg,transparent 0 3.500px,rgba(215,90,80,.55) 3.500px 4.400px)"></div>
      <div style="left:-8px;top:25px;width:22px;height:22px;border-radius:50%;background:#f2c0b8;background-image:repeating-linear-gradient(0deg,transparent 0 3.500px,rgba(215,90,80,.55) 3.500px 4.400px),repeating-linear-gradient(90deg,transparent 0 3.500px,rgba(215,90,80,.55) 3.500px 4.400px)"></div>
      <div style="left:6px;top:4px;width:4px;height:4px;border-radius:50%;background:#f88a74"></div>
      <div style="left:33px;top:3px;width:3px;height:3px;border-radius:50%;background:#f88a74"></div>
      <div style="left:35px;top:29px;width:6.500px;height:6.500px;border-radius:50%;background:#fa7a5e"></div>
      <div style="left:16px;top:13.500px;width:4px;height:1px;background:#666"></div>
      <span class="t" style="left:4px;top:16.500px;font-family:'Liberation Serif',serif;font-style:italic;font-weight:bold;font-size:9px;color:#e8594a;letter-spacing:-.3px">Thanh&nbsp;&nbsp;Hà</span>
    </div>
    <div class="abs" style="left:91px;top:0;width:1.500px;height:39px;background:#d82424"></div>
    <div class="abs" style="left:151px;top:0;width:1.500px;height:39px;background:#d82424"></div>
  </div>
</div>
<div id="player" class="panel" style="left:780px;top:205px;width:244px;height:206px">
  <div class="ph" style="width:244px;height:17px;line-height:16px"><i class="t" style="left:0;width:220px;text-align:center;transform:scaleX(.87)">Lớp</i><svg style="left:218px;top:2px" width="24" height="11" viewBox="0 0 24 11"><path d="M5.500 3.500h-3v5.500h5.500v-3" fill="none" stroke="#c4c4c4" stroke-width="1.100"/><path d="M5.500 6l3.500-3.500M6.800 2h2.700v2.700" fill="none" stroke="#c4c4c4" stroke-width="1"/><path d="M16 3l5 5M21 3l-5 5" stroke="#d8d8d8" stroke-width="1.900"/></svg></div>
  <span class="t sx" style="left:4px;top:23px;font-size:10px;color:#d8d8d8">Độ trong</span>
  <div class="abs" style="left:66px;top:21px;width:140px;height:11px;background:linear-gradient(to right,#74bcf4,#5298d6)"></div>
  <span class="t sx" style="left:211px;top:23px;font-size:10px;color:#d8d8d8">100 %</span>
  <span class="t sx" style="left:4px;top:42px;font-size:10px;color:#d8d8d8">Pha trộn</span>
  <div class="abs" style="left:66px;top:38px;width:173px;height:15px;background:#444;border-radius:2px"><span class="t" style="left:2px;top:3.500px;font-size:9.500px;color:#c8c8c8;transform:scaleX(.84);transform-origin:0 50%">Bình thường</span><svg style="left:163px;top:6px" width="6" height="4" viewBox="0 0 6 4"><path d="M0 0h6l-3 3.500z" fill="#b0b0b0"/></svg></div>
  <div class="abs" style="left:6px;top:61px;width:9px;height:9px;border:1px solid #4a4a4a"></div><span class="t sx" style="left:18px;top:61px;font-size:9.500px;color:#5c5c5c">Bảo vệ alpha</span>
  <div class="abs" style="left:86px;top:61px;width:9px;height:9px;border:1px solid #d0d0d0"></div><span class="t sx" style="left:98px;top:61px;font-size:9.500px;color:#d8d8d8">Xén bớt</span>
  <div class="abs" style="left:166px;top:61px;width:9px;height:9px;border:1px solid #d0d0d0"></div><span class="t sx" style="left:178px;top:61px;font-size:9.500px;color:#d8d8d8">Khóa</span>
  <div class="abs" style="left:2px;top:76px;width:225px;height:105px;background:#4c4c4c;overflow:hidden">
    <div style="left:0;top:0;width:225px;height:29px;background:#575757"><div style="left:4px;top:11px;width:7px;height:7px;border-radius:50%;background:#dcdcdc"></div><div style="left:14px;top:0;width:211px;height:29px;background:#4f9bd7"></div>
      <div style="left:25px;top:10px;width:26px;height:8px;background-color:#fff;background-image:linear-gradient(45deg,#dcdcdc 25%,transparent 25%,transparent 75%,#dcdcdc 75%),linear-gradient(45deg,#dcdcdc 25%,transparent 25%,transparent 75%,#dcdcdc 75%);background-size:6px 6px;background-position:0 0,3px 3px;"><span class="t" style="left:1px;top:1px;font-size:5px;font-weight:bold;color:#000;letter-spacing:-.2px">@Kelvawa#</span></div>
      <span class="t sx" style="left:63px;top:9px;font-size:10.500px;font-weight:bold;color:#fff">@Kelvawa</span><svg style="left:209px;top:8px" width="14" height="14" viewBox="0 0 11 11"><g fill="#fff"><circle cx="5.500" cy="5.500" r="3.400"/><path d="M4.600 0h1.800v11h-1.800zM0 4.600h11v1.800h-11z"/><path d="M4.600 0h1.800v11h-1.800zM0 4.600h11v1.800h-11z" transform="rotate(45 5.500 5.500)"/></g><circle cx="5.500" cy="5.500" r="1.500" fill="#4f9bd7"/></svg></div>
    <div style="left:0;top:30px;width:225px;height:29px;background:#575757"><div style="left:4px;top:11px;width:7px;height:7px;border-radius:50%;background:#dcdcdc"></div>
      <div style="left:25px;top:4px;width:26px;height:20px;background-color:#fff;background-image:linear-gradient(45deg,#dcdcdc 25%,transparent 25%,transparent 75%,#dcdcdc 75%),linear-gradient(45deg,#dcdcdc 25%,transparent 25%,transparent 75%,#dcdcdc 75%);background-size:6px 6px;background-position:0 0,3px 3px;"><span class="t" style="left:2px;top:6px;font-family:'Liberation Serif',serif;font-style:italic;font-weight:bold;font-size:5.500px;letter-spacing:-.2px;color:#e8594a">Thanh Hà</span></div>
      <span class="t sx" style="left:63px;top:9px;font-size:10.500px;color:#ececec">Lớp1</span></div>
    <div style="left:0;top:60px;width:225px;height:29px;background:#575757"><div style="left:4px;top:11px;width:7px;height:7px;border-radius:50%;background:#dcdcdc"></div>
      <div style="left:25px;top:4px;width:26px;height:20px;background-color:#fff;background-image:linear-gradient(45deg,#dcdcdc 25%,transparent 25%,transparent 75%,#dcdcdc 75%),linear-gradient(45deg,#dcdcdc 25%,transparent 25%,transparent 75%,#dcdcdc 75%);background-size:6px 6px;background-position:0 0,3px 3px;overflow:hidden"><div style="left:17px;top:-4px;width:12px;height:12px;border-radius:50%;background:#e06a5c"></div><div style="left:-3px;top:13px;width:11px;height:11px;border-radius:50%;background:#e06a5c"></div><div style="left:19px;top:15px;width:3.500px;height:3.500px;border-radius:50%;background:#e84a3a"></div><div style="left:3px;top:2px;width:2.500px;height:2.500px;border-radius:50%;background:#e84a3a"></div></div>
      <span class="t sx" style="left:63px;top:9px;font-size:10.500px;color:#ececec">Lớp2</span></div>
    <div style="left:0;top:90px;width:225px;height:15px;background:#4c4c4c"></div>
  </div>
  <div class="abs" style="left:228px;top:76px;width:14px;height:105px;background:#2c2c2c"></div>
  <svg class="abs" style="left:228px;top:76px" width="14" height="105" viewBox="0 0 14 105"><path d="M7 2.500l3 4.500h-6z" fill="#aaa"/><path d="M7 103l3-4.500h-6z" fill="#aaa"/><rect x="1" y="9" width="12" height="87" rx="4" fill="#6b6b6b"/></svg>
  <div class="btn" style="left:4px;top:184.5px;width:18px;height:18px"><svg width="16" height="16" viewBox="0 0 16 16"><path d="M4.500 3h4.500l2.500 2.500v7.500h-7z" fill="none" stroke="#e6e6e6" stroke-width="1.200"/><path d="M9 3v2.500h2.500" fill="none" stroke="#e6e6e6" stroke-width="1"/></svg></div><div class="btn" style="left:24px;top:184.5px;width:18px;height:18px"><svg width="16" height="16" viewBox="0 0 16 16"><path d="M4.500 3h4.500l2.500 2.500v7.500h-7z" fill="none" stroke="#e6e6e6" stroke-width="1.200"/><path d="M9 3v2.500h2.500" fill="none" stroke="#e6e6e6" stroke-width="1"/><text x="8" y="11.500" font-family="Liberation Sans,sans-serif" font-size="6" font-weight="bold" fill="#e6e6e6" text-anchor="middle">8</text></svg></div><div class="btn" style="left:45px;top:184.5px;width:18px;height:18px"><svg width="16" height="16" viewBox="0 0 16 16"><path d="M4.500 3h4.500l2.500 2.500v7.500h-7z" fill="none" stroke="#e6e6e6" stroke-width="1.200"/><path d="M9 3v2.500h2.500" fill="none" stroke="#e6e6e6" stroke-width="1"/><text x="8" y="11.500" font-family="Liberation Sans,sans-serif" font-size="6" font-weight="bold" fill="#e6e6e6" text-anchor="middle">1</text></svg></div><div class="btn" style="left:65px;top:184.5px;width:23px;height:18px"><svg width="21" height="16" viewBox="0 0 21 16"><path d="M4.500 3h4.500l2.500 2.500v4M4.500 3v10h4" fill="none" stroke="#e6e6e6" stroke-width="1.200"/><path d="M11 9.500v5M8.500 12h5" stroke="#e6e6e6" stroke-width="1.400"/><path d="M15 6.500h5l-2.500 3z" fill="#e6e6e6"/></svg></div><div class="btn" style="left:90px;top:184.5px;width:18px;height:18px"><svg width="16" height="16" viewBox="0 0 16 16"><path d="M3 4.500h4l1 1.500h5v6.500h-10z" fill="#e6e6e6"/></svg></div><div class="abs" style="left:111px;top:188.5px;width:1px;height:10px;background:#555"></div><div class="btn" style="left:116px;top:184.5px;width:18px;height:18px"><svg width="16" height="16" viewBox="0 0 16 16"><rect x="6" y="3.500" width="7" height="7" fill="none" stroke="#bbb" stroke-width="1.100"/><rect x="3.500" y="6" width="7" height="7" fill="#424242" stroke="#bbb" stroke-width="1.100"/></svg></div><div class="btn dark" style="left:136px;top:184.5px;width:18px;height:18px"><svg width="16" height="16" viewBox="0 0 16 16"><rect x="3" y="3" width="3.500" height="3.500" fill="none" stroke="#e6e6e6" stroke-width="1"/><rect x="3" y="9.500" width="3.500" height="3.500" fill="#e6e6e6"/><rect x="9.500" y="6" width="4" height="4" fill="#e6e6e6"/><path d="M6.500 5l3 2M6.500 11l3-2" stroke="#e6e6e6" stroke-width="1"/></svg></div><div class="abs" style="left:157px;top:188.5px;width:1px;height:10px;background:#555"></div><div class="btn" style="left:161px;top:184.5px;width:18px;height:18px"><svg width="16" height="16" viewBox="0 0 16 16"><path d="M3.800 5.800h8.400v7.700h-8.400z" fill="#e6e6e6"/><path d="M6 7v5.200M8 7v5.200M10 7v5.200" stroke="#424242" stroke-width=".9"/><path d="M3 4.600h10M6.300 3.200h3.400" stroke="#e6e6e6" stroke-width="1.300"/></svg></div>
  <div class="abs" style="left:1px;top:204px;width:243px;height:1px;background:#273f58"></div>
</div>
<div id="psize" class="panel" style="left:780px;top:415px;width:244px;height:116px;z-index:2">
  <div class="ph" style="width:244px;height:16px;line-height:15px"><i class="t" style="left:0;width:220px;text-align:center;transform:scaleX(.87)">Brush Size</i><svg style="left:218px;top:2px" width="24" height="11" viewBox="0 0 24 11"><path d="M5.500 3.500h-3v5.500h5.500v-3" fill="none" stroke="#c4c4c4" stroke-width="1.100"/><path d="M5.500 6l3.500-3.500M6.800 2h2.700v2.700" fill="none" stroke="#c4c4c4" stroke-width="1"/><path d="M16 3l5 5M21 3l-5 5" stroke="#d8d8d8" stroke-width="1.900"/></svg></div>
  <div class="abs" style="left:0;top:16px;width:228px;height:99.500px;background:#555;overflow:hidden"><div class="abs" style="left:0px;top:0px;width:30px;height:37.500px;background:#555;border-right:1px solid #4a4a4a;border-bottom:1px solid #4a4a4a"><svg style="left:0;top:0" width="30" height="30" viewBox="0 0 30 30"><circle cx="14.500" cy="14.5" r="0.3" fill="#f2f2f2"/></svg><span class="t" style="left:0;top:28px;width:29px;text-align:center;font-size:7.500px;color:#f0f0f0">1</span></div><div class="abs" style="left:30px;top:0px;width:30px;height:37.500px;background:#555;border-right:1px solid #4a4a4a;border-bottom:1px solid #4a4a4a"><svg style="left:0;top:0" width="30" height="30" viewBox="0 0 30 30"><circle cx="14.500" cy="14.5" r="0.5" fill="#f2f2f2"/></svg><span class="t" style="left:0;top:28px;width:29px;text-align:center;font-size:7.500px;color:#f0f0f0">1.5</span></div><div class="abs" style="left:60px;top:0px;width:30px;height:37.500px;background:#555;border-right:1px solid #4a4a4a;border-bottom:1px solid #4a4a4a"><svg style="left:0;top:0" width="30" height="30" viewBox="0 0 30 30"><circle cx="14.500" cy="14.5" r="0.8" fill="#f2f2f2"/></svg><span class="t" style="left:0;top:28px;width:29px;text-align:center;font-size:7.500px;color:#f0f0f0">2</span></div><div class="abs" style="left:90px;top:0px;width:30px;height:37.500px;background:#555;border-right:1px solid #4a4a4a;border-bottom:1px solid #4a4a4a"><svg style="left:0;top:0" width="30" height="30" viewBox="0 0 30 30"><circle cx="14.500" cy="14.5" r="1.2" fill="#f2f2f2"/></svg><span class="t" style="left:0;top:28px;width:29px;text-align:center;font-size:7.500px;color:#f0f0f0">3</span></div><div class="abs" style="left:120px;top:0px;width:30px;height:37.500px;background:#555;border-right:1px solid #4a4a4a;border-bottom:1px solid #4a4a4a"><svg style="left:0;top:0" width="30" height="30" viewBox="0 0 30 30"><circle cx="14.500" cy="14.5" r="1.8" fill="#f2f2f2"/></svg><span class="t" style="left:0;top:28px;width:29px;text-align:center;font-size:7.500px;color:#f0f0f0">4</span></div><div class="abs" style="left:150px;top:0px;width:30px;height:37.500px;background:#555;border-right:1px solid #4a4a4a;border-bottom:1px solid #4a4a4a"><svg style="left:0;top:0" width="30" height="30" viewBox="0 0 30 30"><circle cx="14.500" cy="14.5" r="2.2" fill="#f2f2f2"/></svg><span class="t" style="left:0;top:28px;width:29px;text-align:center;font-size:7.500px;color:#f0f0f0">5</span></div><div class="abs" style="left:180px;top:0px;width:30px;height:37.500px;background:#555;border-right:1px solid #4a4a4a;border-bottom:1px solid #4a4a4a"><svg style="left:0;top:0" width="30" height="30" viewBox="0 0 30 30"><circle cx="14.500" cy="14.5" r="2.8" fill="#f2f2f2"/></svg><span class="t" style="left:0;top:28px;width:29px;text-align:center;font-size:7.500px;color:#f0f0f0">7</span></div><div class="abs" style="left:210px;top:0px;width:18px;height:37.500px;background:#505050;border-right:1px solid #4a4a4a;border-bottom:1px solid #4a4a4a"></div><div class="abs" style="left:0px;top:37.5px;width:30px;height:37.500px;background:#555;border-right:1px solid #4a4a4a;border-bottom:1px solid #4a4a4a"><svg style="left:0;top:0" width="30" height="30" viewBox="0 0 30 30"><circle cx="14.500" cy="14.5" r="3.8" fill="#f2f2f2"/></svg><span class="t" style="left:0;top:28px;width:29px;text-align:center;font-size:7.500px;color:#f0f0f0">10</span></div><div class="abs" style="left:30px;top:37.5px;width:30px;height:37.500px;background:#555;border-right:1px solid #4a4a4a;border-bottom:1px solid #4a4a4a"><svg style="left:0;top:0" width="30" height="30" viewBox="0 0 30 30"><circle cx="14.500" cy="14.5" r="4.6" fill="#f2f2f2"/></svg><span class="t" style="left:0;top:28px;width:29px;text-align:center;font-size:7.500px;color:#f0f0f0">12</span></div><div class="abs" style="left:60px;top:37.5px;width:30px;height:37.500px;background:#555;border-right:1px solid #4a4a4a;border-bottom:1px solid #4a4a4a"><svg style="left:0;top:0" width="30" height="30" viewBox="0 0 30 30"><circle cx="14.500" cy="14.5" r="5.8" fill="#f2f2f2"/></svg><span class="t" style="left:0;top:28px;width:29px;text-align:center;font-size:7.500px;color:#f0f0f0">15</span></div><div class="abs" style="left:90px;top:37.5px;width:30px;height:37.500px;background:#555;border-right:1px solid #4a4a4a;border-bottom:1px solid #4a4a4a"><svg style="left:0;top:0" width="30" height="30" viewBox="0 0 30 30"><circle cx="14.500" cy="14.5" r="7.5" fill="#f2f2f2"/></svg><span class="t" style="left:0;top:28px;width:29px;text-align:center;font-size:7.500px;color:#f0f0f0">20</span></div><div class="abs" style="left:120px;top:37.5px;width:30px;height:37.500px;background:#555;border-right:1px solid #4a4a4a;border-bottom:1px solid #4a4a4a"><svg style="left:0;top:0" width="30" height="30" viewBox="0 0 30 30"><circle cx="14.500" cy="14.5" r="9" fill="#f2f2f2"/></svg><span class="t" style="left:0;top:28px;width:29px;text-align:center;font-size:7.500px;color:#f0f0f0">25</span></div><div class="abs" style="left:150px;top:37.5px;width:30px;height:37.500px;background:#555;border-right:1px solid #4a4a4a;border-bottom:1px solid #4a4a4a"><svg style="left:0;top:0" width="30" height="30" viewBox="0 0 30 30"><circle cx="14.500" cy="14.5" r="9" fill="#f2f2f2"/></svg><span class="t" style="left:0;top:28px;width:29px;text-align:center;font-size:7.500px;color:#f0f0f0">30</span></div><div class="abs" style="left:180px;top:37.5px;width:30px;height:37.500px;background:#555;border-right:1px solid #4a4a4a;border-bottom:1px solid #4a4a4a"><svg style="left:0;top:0" width="30" height="30" viewBox="0 0 30 30"><circle cx="14.500" cy="14.5" r="9" fill="#f2f2f2"/></svg><span class="t" style="left:0;top:28px;width:29px;text-align:center;font-size:7.500px;color:#f0f0f0">40</span></div><div class="abs" style="left:210px;top:37.5px;width:18px;height:37.500px;background:#505050;border-right:1px solid #4a4a4a;border-bottom:1px solid #4a4a4a"></div><div class="abs" style="left:0px;top:75px;width:30px;height:37.500px;background:#555;border-right:1px solid #4a4a4a;border-bottom:1px solid #4a4a4a"><svg style="left:0;top:0" width="30" height="30" viewBox="0 0 30 30"><circle cx="14.500" cy="14.5" r="9" fill="#f2f2f2"/></svg></div><div class="abs" style="left:30px;top:75px;width:30px;height:37.500px;background:#555;border-right:1px solid #4a4a4a;border-bottom:1px solid #4a4a4a"><svg style="left:0;top:0" width="30" height="30" viewBox="0 0 30 30"><circle cx="14.500" cy="14.5" r="9" fill="#f2f2f2"/></svg></div><div class="abs" style="left:60px;top:75px;width:30px;height:37.500px;background:#555;border-right:1px solid #4a4a4a;border-bottom:1px solid #4a4a4a"><svg style="left:0;top:0" width="30" height="30" viewBox="0 0 30 30"><circle cx="14.500" cy="14.5" r="9" fill="#f2f2f2"/></svg></div><div class="abs" style="left:90px;top:75px;width:30px;height:37.500px;background:#555;border-right:1px solid #4a4a4a;border-bottom:1px solid #4a4a4a"><svg style="left:0;top:0" width="30" height="30" viewBox="0 0 30 30"><circle cx="14.500" cy="14.5" r="9" fill="#f2f2f2"/></svg></div><div class="abs" style="left:120px;top:75px;width:30px;height:37.500px;background:#555;border-right:1px solid #4a4a4a;border-bottom:1px solid #4a4a4a"><svg style="left:0;top:0" width="30" height="30" viewBox="0 0 30 30"><circle cx="14.500" cy="14.5" r="9" fill="#f2f2f2"/></svg></div><div class="abs" style="left:150px;top:75px;width:30px;height:37.500px;background:#555;border-right:1px solid #4a4a4a;border-bottom:1px solid #4a4a4a"><svg style="left:0;top:0" width="30" height="30" viewBox="0 0 30 30"><circle cx="14.500" cy="14.5" r="9" fill="#f2f2f2"/></svg></div><div class="abs" style="left:180px;top:75px;width:30px;height:37.500px;background:#555;border-right:1px solid #4a4a4a;border-bottom:1px solid #4a4a4a"><svg style="left:0;top:0" width="30" height="30" viewBox="0 0 30 30"><circle cx="14.500" cy="14.5" r="9" fill="#f2f2f2"/></svg></div><div class="abs" style="left:210px;top:75px;width:18px;height:37.500px;background:#505050;border-right:1px solid #4a4a4a;border-bottom:1px solid #4a4a4a"></div></div>
  <div class="abs" style="left:229px;top:16px;width:14px;height:100px;background:#2c2c2c"></div>
  <svg class="abs" style="left:229px;top:16px" width="14" height="100" viewBox="0 0 14 100"><path d="M7 1.500l3 4.500h-6z" fill="#aaa"/><path d="M7 97l3-4.500h-6z" fill="#aaa"/><rect x="1" y="9" width="12" height="55" rx="4" fill="#6b6b6b"/></svg>
  <span class="t" style="left:25px;top:73px;font-size:15px;color:rgba(255,255,255,.42);letter-spacing:-.15px">Activate Windows</span>
  <span class="t" style="left:25px;top:93px;font-size:11px;color:rgba(255,255,255,.38)">Go to Settings to activate Windows.</span>
</div>
<!--RIGHT_E-->

<!-- ===== STATUS BAR ===== -->
<div id="status" class="abs" style="left:0;top:529px;width:1024px;height:17px;background:#242424">
  <span class="t" style="left:5px;top:5px;font-size:9.500px;color:#d4d4d4;transform:scaleX(.88);transform-origin:0 50%">2300 * 1800 pixel&nbsp;&nbsp;&nbsp;(16.7 * 13.1cm)&nbsp;&nbsp;&nbsp;350 dpi&nbsp;&nbsp;&nbsp;25 %&nbsp;&nbsp;&nbsp;( 1034, 828 )</span>
</div>

<!-- ===== TASKBAR ===== -->
<div id="task" class="abs" style="left:0;top:546px;width:1024px;height:30px;background:linear-gradient(90deg,#45362f 0%,#4a3c33 35%,#483b32 65%,#3c322c 85%,#352d29 100%)">
  <div class="abs" style="left:36px;top:0;width:258px;height:30px;background:#f2f2f2"></div>
  <span class="t" style="left:66px;top:9px;font-size:12px;color:#2b2b2b;transform:scaleX(.905);transform-origin:0 50%">Type here to search</span>
  <!--TASK_S-->
  <svg class="abs" style="left:12px;top:9px" width="12.500" height="12.500" viewBox="0 0 14 14"><path d="M0 2l5.800-.8v5.400h-5.800zM6.600 1.100l7.400-1.100v6.600h-7.400zM0 7.400h5.800v5.400l-5.800-.8zM6.600 7.400h7.400v6.600l-7.400-1.100z" fill="#fff"/></svg>
  <svg class="abs" style="left:44px;top:7px" width="16" height="16" viewBox="0 0 16 16"><circle cx="9.500" cy="6" r="4.200" fill="none" stroke="#222" stroke-width="1.300"/><path d="M6.500 9l-4.500 5" stroke="#222" stroke-width="1.500"/></svg>
  <svg class="abs" style="left:304px;top:8px" width="16" height="14" viewBox="0 0 16 14"><g fill="none" stroke="#fff" stroke-width="1"><rect x="3.500" y="3.500" width="7" height="7"/><path d="M1 2.500v9M13 2.500v1.500M13 6v2M13 10v1.500"/><path d="M3.500 1h7M3.500 13h7"/></g></svg>
  <div class="abs" style="left:332px;top:0;width:36px;height:30px;background:#6f625c"></div>
  <div class="abs" style="left:332px;top:28px;width:36px;height:2px;background:#8ec4ee"></div>
  <div class="abs" style="left:341px;top:5px;width:19px;height:19px;border-radius:4px;background:#f4f4f4"></div>
  <svg class="abs" style="left:343px;top:7px" width="15" height="15" viewBox="0 0 15 15"><circle cx="7.500" cy="7.500" r="6.500" fill="#2fb39f"/><path d="M7.500 7.500V1A6.500 6.500 0 0 1 13.800 9z" fill="#ef5b45"/><path d="M7.500 7.500l6.300 1.500A6.500 6.500 0 0 1 5 13.500z" fill="#f4b731"/><circle cx="6.300" cy="7.300" r="2.700" fill="#fff"/></svg>
  <svg class="abs" style="left:377px;top:6px" width="19" height="17" viewBox="0 0 19 17"><path d="M1 2h6l1.500 2h9.500v11h-17z" fill="#f2b632"/><path d="M1 6h17v9h-17z" fill="#fbd968"/><rect x="4" y="9" width="11" height="6" fill="#3f8fd8"/><rect x="6" y="11.500" width="7" height="3.500" fill="#fbd968"/></svg>
  <svg class="abs" style="left:413px;top:5px" width="20" height="19" viewBox="0 0 20 19"><rect x="7" y="1" width="12" height="17" fill="#f4f4f4"/><path d="M11 5h6M11 8h6M11 11h6M11 14h6" stroke="#2b65b8" stroke-width="1"/><rect x="0" y="3" width="12" height="13" fill="#2458a8"/><text x="6" y="13.500" font-family="Liberation Sans,sans-serif" font-weight="bold" font-size="10" fill="#fff" text-anchor="middle">W</text></svg>
  <div class="abs" style="left:450px;top:6px;width:18px;height:18px;border-radius:5px;background:#3c8cf0"></div>
  <svg class="abs" style="left:450px;top:6px" width="18" height="18" viewBox="0 0 18 18"><rect x="4" y="6" width="7" height="6" rx="1.200" fill="#fff"/><path d="M11.500 8.500l3-2v5l-3-2z" fill="#fff"/></svg>
  <div class="abs" style="left:446px;top:28px;width:27px;height:2px;background:#8ec4ee"></div>
  <div class="abs" style="left:479px;top:0;width:36px;height:30px;background:#c8772e"></div>
  <div class="abs" style="left:487px;top:4px;width:19px;height:19px;border-radius:5px;background:#fff"></div>
  <div class="abs" style="left:489px;top:6px;width:15px;height:13px;border-radius:6px;background:#2a6df0"></div>
  <span class="t" style="left:490px;top:8px;font-size:7px;font-weight:bold;color:#fff">Zalo</span>
  <div class="abs" style="left:497px;top:14px;width:11px;height:11px;border-radius:50%;background:#e8232a"></div>
  <span class="t" style="left:497px;top:15px;width:11px;text-align:center;font-size:8px;font-weight:bold;color:#fff">2</span>
  <svg class="abs" style="left:525px;top:5px" width="19" height="19" viewBox="0 0 19 19"><circle cx="9.500" cy="9.500" r="9" fill="#db4437"/><path d="M9.500 9.500L1.700 5A9 9 0 0 0 9.500 18.500l4-7z" fill="#0f9d58"/><path d="M9.500 9.500l4 2-4 7A9 9 0 0 0 17.300 5h-8z" fill="#ffcd40"/><circle cx="9.500" cy="9.500" r="4.200" fill="#fff"/><circle cx="9.500" cy="9.500" r="3.300" fill="#4285f4"/><circle cx="13.500" cy="13.500" r="4.500" fill="#d8b8a0"/><circle cx="13.500" cy="12.500" r="2.200" fill="#3a2a22"/></svg>
  <div class="abs" style="left:519px;top:28px;width:27px;height:2px;background:#8ec4ee"></div>
  <svg class="abs" style="left:699px;top:7px" width="19" height="15" viewBox="0 0 19 15"><path d="M4.500 11.500a3.500 3.500 0 0 1 .3-7A5 5 0 0 1 14 5.500a3.200 3.200 0 0 1 .5 6z" fill="#e4edf6"/><path d="M7 12.500a2.300 2.300 0 0 1 .3-4.500A3 3 0 0 1 12.800 9a2 2 0 0 1 .3 3.500z" fill="#8fc1ec"/><path d="M9.800 9.500v3M8.600 11.300l1.200 1.300 1.200-1.300" stroke="#e4edf6" stroke-width=".8" fill="none"/></svg>
  <span class="t" style="left:723px;top:10.500px;font-size:11.500px;color:#fff;transform:scaleX(.92);transform-origin:0 50%">66°F&nbsp;&nbsp;Light rain</span>
  <svg class="abs" style="left:805px;top:9px" width="12" height="12" viewBox="0 0 12 12"><path d="M1.500 8l4.500-4.500 4.500 4.500" fill="none" stroke="#fff" stroke-width="1.200"/></svg>
  <svg class="abs" style="left:821px;top:7px" width="16" height="16" viewBox="0 0 16 16"><rect x="2" y="6" width="11" height="7" rx="1" fill="#d8d8d8"/><path d="M3.500 6c0-3 8-3 8 0" fill="#c03a30"/><circle cx="11.500" cy="11.500" r="3.200" fill="#e02020"/><path d="M10 10l3 3M13 10l-3 3" stroke="#fff" stroke-width="1"/></svg>
  <svg class="abs" style="left:842px;top:8px" width="14" height="14" viewBox="0 0 14 14"><rect x="2.500" y="2.500" width="6.500" height="9" rx="1.500" fill="none" stroke="#fff" stroke-width="1"/><circle cx="5.700" cy="6.500" r="1.300" fill="none" stroke="#fff" stroke-width=".9"/><path d="M9.500 5.500l3-1.500v6l-3-1.500M4 0.800h3.500M4 13.200h3.500" fill="none" stroke="#fff" stroke-width="1"/></svg>
  <svg class="abs" style="left:859px;top:8px" width="16" height="14" viewBox="0 0 16 14"><path d="M1.500 5h2.500l3-2.800v9.600l-3-2.800h-2.500z" fill="none" stroke="#fff" stroke-width="1"/><path d="M9 5c1 1 1 3 0 4M10.800 3.500c1.800 1.800 1.800 5.200 0 7" fill="none" stroke="#fff" stroke-width=".9"/><path d="M12.600 2c2.600 2.600 2.600 7.400 0 10" fill="none" stroke="#aaa" stroke-width=".9"/></svg>
  <svg class="abs" style="left:878px;top:8px" width="14" height="14" viewBox="0 0 14 14"><g fill="none" stroke="#d8d8d8" stroke-width="1"><path d="M2 12A10 10 0 0 1 12 2"/><path d="M5 12a7 7 0 0 1 7-7" /><path d="M8 12a4 4 0 0 1 4-4"/></g><circle cx="11" cy="11.500" r="1.300" fill="#d8d8d8"/></svg>
  <svg class="abs" style="left:894px;top:9px" width="17" height="12" viewBox="0 0 17 12"><rect x="4" y="3" width="11" height="6.500" fill="none" stroke="#fff" stroke-width="1"/><path d="M15.500 5v2.500" stroke="#fff" stroke-width="1.200"/><path d="M1.500 1.500v4h2.500M1.500 1.500h1.800" fill="none" stroke="#fff" stroke-width="1"/></svg>
  <span class="t" style="left:914px;top:11px;font-size:9.500px;color:#fff;letter-spacing:-.3px">ENG</span>
  <span class="t" style="left:933.500px;top:3px;width:54px;text-align:center;font-size:9.500px;color:#fff;letter-spacing:-.4px">10:46 AM</span>
  <span class="t" style="left:933.500px;top:17px;width:54px;text-align:center;font-size:9.500px;color:#fff;letter-spacing:-.4px">15/12/2021</span>
  <svg class="abs" style="left:994px;top:8px" width="14" height="14" viewBox="0 0 14 14"><path d="M1 1h12v9.500h-6l-3 3v-3h-3z" fill="#fff"/><path d="M3.500 4h7M3.500 6.500h7" stroke="#3a302c" stroke-width="1"/></svg>
  <!--TASK_E-->
</div>

</div>
</body>
</html>
